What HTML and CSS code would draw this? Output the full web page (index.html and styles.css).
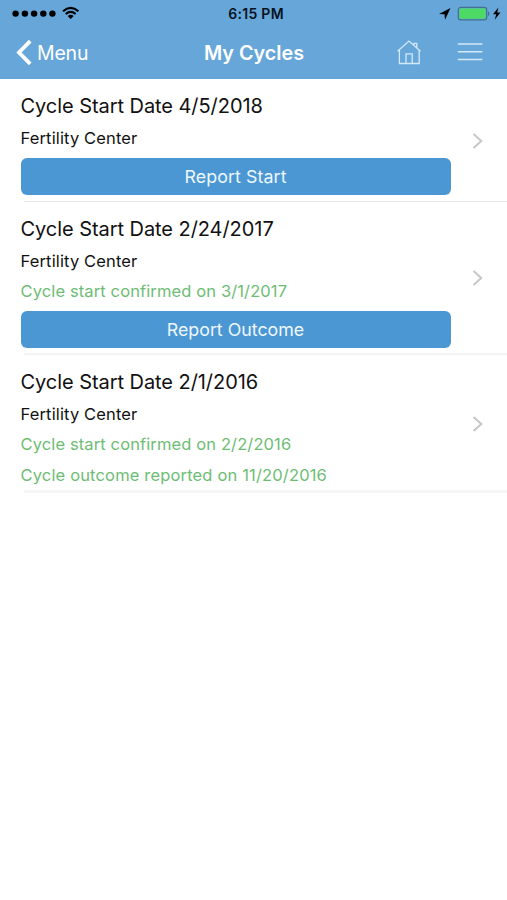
FILE: index.html
```html
<!DOCTYPE html>
<html lang="en">
<head>
<meta charset="utf-8">
<title>My Cycles</title>
<link rel="stylesheet" href="styles.css">
</head>
<body>
<header class="header">
  <div class="status">
    <svg class="signal" width="68" height="16" viewBox="0 0 68 16">
      <circle cx="3.6" cy="7.6" r="3.2"/><circle cx="12.9" cy="7.6" r="3.2"/><circle cx="22.1" cy="7.6" r="3.2"/><circle cx="31.3" cy="7.6" r="3.2"/><circle cx="40.4" cy="7.6" r="3.2"/>
      <path d="M51 5.3Q58.7-1.4 66.4 5.3M53.7 8Q58.7 3.8 63.7 8" fill="none" stroke="#000" stroke-width="2.1"/>
      <path d="M55.7 10Q58.7 7.7 61.7 10L58.7 13Z"/>
    </svg>
    <span class="time">6:15 PM</span>
    <svg class="power" width="64" height="16" viewBox="0 0 64 16">
      <path d="M1 7.9L12.5 2L7 13.8L6.5 8.3Z"/>
      <rect x="20.3" y="1.3" width="28.4" height="12.6" rx="2.6" fill="none" stroke="#41718f" stroke-width="1.2"/>
      <rect x="21.4" y="2.4" width="26.2" height="10.4" rx="1.3" fill="#4cd964"/>
      <path d="M50 5Q52.6 7.6 50 10.2Z" fill="#41718f"/>
      <path d="M60.4 1.6L55 8.2H58.2L56.8 13.8L62.4 6.6H59.2Z"/>
    </svg>
  </div>
  <nav class="nav">
    <a class="back">
      <svg width="17" height="28" viewBox="0 0 17 28"><path d="M15.2 2.2L4 13.5L15.2 24.8" fill="none" stroke="#fff" stroke-width="3.8"/></svg>
      <span>Menu</span>
    </a>
    <h1 class="heading">My Cycles</h1>
    <div class="actions">
      <svg width="26" height="26" viewBox="0 0 26 26" fill="none" stroke="#d4e9fa" stroke-width="1.3">
        <path d="M1.5 11.3L13 1.1L24.5 11.3M3.4 10V23.5H23.2V10M10 23.5V13.9H16.2V23.5M18 5V3.3H20.8V7.7"/>
      </svg>
      <svg width="26" height="26" viewBox="0 0 26 26" stroke="#d4e9fa" stroke-width="1.4"><path d="M.8 4H25.4M.8 11.8H25.4M.8 19.5H25.4"/></svg>
    </div>
  </nav>
</header>
<main class="list">
  <section class="row row-start">
    <div class="content">
      <h2 class="title">Cycle Start Date 4/5/2018</h2>
      <p class="center">Fertility Center</p>
      <button class="button start">Report Start</button>
    </div>
    <svg class="chevron" width="12" height="18" viewBox="0 0 12 18"><path d="M1.5 2L9.3 9L1.5 16"/></svg>
  </section>
  <section class="row row-outcome">
    <div class="content">
      <h2 class="title">Cycle Start Date 2/24/2017</h2>
      <p class="center">Fertility Center</p>
      <p class="note">Cycle start confirmed on 3/1/2017</p>
      <button class="button">Report Outcome</button>
    </div>
    <svg class="chevron" width="12" height="18" viewBox="0 0 12 18"><path d="M1.5 2L9.3 9L1.5 16"/></svg>
  </section>
  <section class="row row-complete">
    <div class="content">
      <h2 class="title">Cycle Start Date 2/1/2016</h2>
      <p class="center">Fertility Center</p>
      <p class="note">Cycle start confirmed on 2/2/2016</p>
      <p class="note reported">Cycle outcome reported on 11/20/2016</p>
    </div>
    <svg class="chevron" width="12" height="18" viewBox="0 0 12 18"><path d="M1.5 2L9.3 9L1.5 16"/></svg>
  </section>
</main>
</body>
</html>
```
FILE: styles.css
```css
* { box-sizing: border-box; }
body { margin: 0; background: #fff; font-family: Inter, "Liberation Sans", sans-serif; color: #111; }
h1, h2, p { margin: 0; font-weight: 400; }
svg { display: block; }
.header { height: 79px; background: #66a6d8; }
.status { display: grid; grid-template-columns: 1fr auto 1fr; align-items: center; height: 27px; padding: 0 5px 0 12px; }
.time { font-size: 14px; font-weight: 600; letter-spacing: .3px; color: #06131f; transform: translateX(-1px); }
.power { justify-self: end; }
.nav { display: grid; grid-template-columns: 1fr auto 1fr; align-items: center; height: 51px; padding: 0 24px 0 15px; color: #fff; }
.back { display: flex; align-items: center; gap: 5px; font-size: 19.5px; font-weight: 400; letter-spacing: -.2px; }
.heading { font-size: 19.8px; font-weight: 600; transform: translateX(5px); }
.actions { display: flex; justify-content: flex-end; gap: 35px; }
.row { display: flex; align-items: center; padding-left: 20px; background: linear-gradient(#e6e9ec, #e6e9ec) 24px 100% / 100% 1px no-repeat; }
.row-start { height: 123px; }
.row-outcome { height: 153px; background-size: 100% 2px; background-image: linear-gradient(#f3f3f3, #f3f3f3); }
.row-complete { height: 138px; background-size: 100% 3px; background-image: linear-gradient(#f6f6f6, #f6f6f6); }
.content { width: 431px; height: 100%; padding-top: 11px; }
.title { font-size: 20px; line-height: 32px; padding-left: .5px; letter-spacing: -.06px; }
.center, .note { font-size: 16.5px; line-height: 31px; padding-left: .5px; letter-spacing: .14px; }
.center { line-height: 32px; margin-bottom: -1px; }
.note { color: #6dbd74; line-height: 30.5px; letter-spacing: .12px; }
.button { display: block; width: 430px; height: 36.5px; margin: 5px 0 0 .5px; padding: 0; border: 0; border-radius: 6px; background: #4b97d3; color: #eef7ff; font: 400 17.8px Inter, "Liberation Sans", sans-serif; }
.row-outcome .button { margin-top: 4.5px; }
.start { letter-spacing: .1px; }
.chevron { margin-left: 21px; fill: none; stroke: #c7c7cb; stroke-width: 2; }
.row-outcome .chevron { transform: translateY(-1px); }
.reported { letter-spacing: .16px; }
```
